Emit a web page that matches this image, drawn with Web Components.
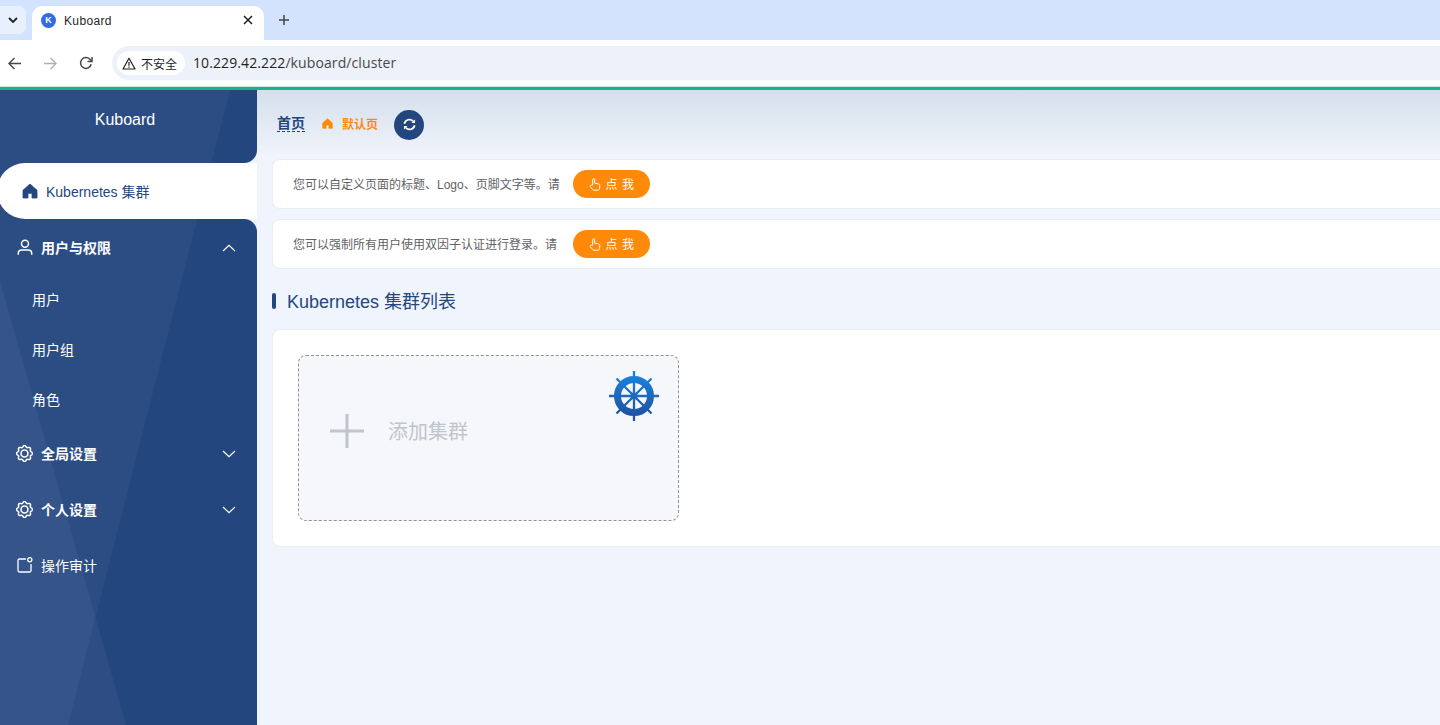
<!DOCTYPE html>
<html lang="zh"><head><meta charset="utf-8"><title>Kuboard</title>
<style>
html,body{margin:0;height:100%;overflow:hidden;background:#f0f4fc;font-family:"Liberation Sans","Noto Sans CJK SC",sans-serif}
body{display:flex;flex-direction:column;width:1440px;height:725px}
.app{display:flex;flex:1;min-height:0}
</style></head><body>
<browser-chrome></browser-chrome>
<div class="app">
<side-bar>
  <menu-item active icon="home">Kubernetes 集群</menu-item>
  <menu-item group icon="user" arrow="up">用户与权限</menu-item>
  <menu-item sub>用户</menu-item>
  <menu-item sub>用户组</menu-item>
  <menu-item sub>角色</menu-item>
  <menu-item group icon="gear" arrow="down">全局设置</menu-item>
  <menu-item group icon="gear" arrow="down">个人设置</menu-item>
  <menu-item plain icon="audit">操作审计</menu-item>
</side-bar>
<main-pane>
  <bread-crumbs></bread-crumbs>
  <tip-bar>您可以自定义页面的标题、Logo、页脚文字等。请</tip-bar>
  <tip-bar>您可以强制所有用户使用双因子认证进行登录。请</tip-bar>
  <section-title>Kubernetes 集群列表</section-title>
  <cluster-panel><add-cluster></add-cluster></cluster-panel>
</main-pane>
</div>
<script>
function def(name,html){customElements.define(name,class extends HTMLElement{connectedCallback(){if(this.shadowRoot)return;const r=this.attachShadow({mode:'open'});r.innerHTML=typeof html==='function'?html(this):html;}})}
function gearPath(){let d='';for(let i=0;i<=96;i++){const t=i/96*Math.PI*2,r=7.2+0.85*Math.cos(8*t);d+=(i?'L':'M')+(8.5+r*Math.sin(t)).toFixed(2)+' '+(8.5-r*Math.cos(t)).toFixed(2);}return d+'z';}
const HOME='M8 1 15 7.200V15H10V10.300H6V15H1V7.200z';
const ICONS={
home:'<svg width="16" height="16" viewBox="0 0 16 16"><path fill="currentColor" stroke="currentColor" stroke-width=".8" stroke-linejoin="round" d="'+HOME+'"/></svg>',
user:'<svg width="16" height="16" viewBox="0 0 16 16" fill="none" stroke="currentColor" stroke-width="1.500"><circle cx="8" cy="4.800" r="3.500"/><path d="M1.300 15.800v-1.600c0-2 1.600-3.300 3.400-3.300h6.600c1.800 0 3.400 1.300 3.400 3.300v1.600"/></svg>',
gear:'<svg width="17" height="17" viewBox="0 0 17 17" fill="none" stroke="currentColor" stroke-width="1.500"><path d="'+gearPath()+'" stroke-linejoin="round"/><circle cx="8.500" cy="8.500" r="3.500" stroke-width="1.600"/></svg>',
audit:'<svg width="16" height="16" viewBox="0 0 16 16" fill="none" stroke="currentColor" stroke-width="1.300"><path d="M9 2H2.500A1.500 1.500 0 0 0 1 3.500v10A1.500 1.500 0 0 0 2.500 15h10a1.500 1.500 0 0 0 1.500-1.500V7"/><circle cx="12.800" cy="2.800" r="2.100"/></svg>',
up:'<svg width="14" height="8" viewBox="0 0 14 8" fill="none" stroke="currentColor" stroke-width="1.200"><path d="M1 7 7 1.300 13 7"/></svg>',
down:'<svg width="14" height="8" viewBox="0 0 14 8" fill="none" stroke="currentColor" stroke-width="1.200"><path d="M1 1l6 5.700L13 1"/></svg>',
hand:'<svg width="12" height="13" viewBox="0 0 12 13" fill="none" stroke="currentColor" stroke-width="1"><path d="M3.700 7V1.700a1 1 0 0 1 2 0V5.200l3.300.6c1.200.2 1.900 1 1.800 2.200l-.2 2.300c-.1 1-.9 1.900-2 1.900H5.200c-.7 0-1.300-.3-1.700-.9L1.400 8.800c-.4-.6-.2-1.200.3-1.500.5-.3 1-.2 1.400.2z" stroke-linejoin="round"/></svg>'
};
def('browser-chrome',`<style>
:host{display:block;flex:none;height:90px;background:#fff;font-family:"Liberation Sans","Noto Sans CJK SC",sans-serif;color:#1f1f1f}
.strip{height:40px;background:#d3e3fd;display:flex;align-items:flex-end;box-sizing:border-box}
.list{width:26px;height:28px;margin:0 6px 6px 0;background:#e8f0fe;border-radius:0 8px 8px 0;display:flex;align-items:center;justify-content:center}
.tab{width:232px;height:34px;background:#fff;border-radius:10px 10px 0 0;display:flex;align-items:center;padding:0 0 6px 9px;box-sizing:border-box;font-size:12px}
.fav{width:15px;height:15px;border-radius:50%;background:#326ce5;color:#fff;font-size:9px;font-weight:700;display:flex;align-items:center;justify-content:center;margin-right:8px;flex:none}
.tt{flex:1;letter-spacing:.35px;padding-top:1px}
.x{margin-right:11px;display:flex}
.plus{margin:0 0 14px 14px;display:flex}
.bar{height:46px;display:flex;align-items:center;box-sizing:border-box}
.nav{width:36px;display:flex;justify-content:center;flex:none}
.omni{flex:1;height:34px;margin-left:8px;margin-right:-30px;background:#edf2fa;border-radius:17px;display:flex;align-items:center;padding-left:5px}
.chip{height:24px;width:68px;box-sizing:border-box;background:#fff;border-radius:12px;display:flex;align-items:center;padding-left:5px;font-size:12px;gap:5px;margin-right:8px}
.url{font-family:"Open Sans","Liberation Sans",sans-serif;font-size:14px;letter-spacing:.1px;color:#1f1f1f;padding-bottom:2px}
.url span{color:#474747}
.line{height:4px;box-sizing:border-box;background:#14b48e;border-top:1.500px solid #cfe9e0}
</style>
<div class="strip">
 <div class="list"><svg width="10" height="7" viewBox="0 0 10 7" fill="none" stroke="#1f1f1f" stroke-width="1.800"><path d="M1 1l4 4 4-4"/></svg></div>
 <div class="tab"><span class="fav">K</span><span class="tt">Kuboard</span>
 <span class="x"><svg width="10" height="10" viewBox="0 0 10 10" stroke="#1f1f1f" stroke-width="1.500"><path d="M1 1l8 8M9 1l-8 8"/></svg></span></div>
 <span class="plus"><svg width="12" height="12" viewBox="0 0 12 12" stroke="#444" stroke-width="1.500"><path d="M6 1v10M1 6h10"/></svg></span>
</div>
<div class="bar">
 <span class="nav" style="margin-left:-4px"><svg width="13" height="13" viewBox="0 0 14 14" fill="none" stroke="#474747" stroke-width="1.500"><path d="M14 7H1.500M7 1 1 7l6 6"/></svg></span>
 <span class="nav"><svg width="13" height="13" viewBox="0 0 14 14" fill="none" stroke="#b0b0b0" stroke-width="1.500"><path d="M0 7h12.500M7 1l6 6-6 6"/></svg></span>
 <span class="nav"><svg width="14" height="14" viewBox="0 0 14 14" fill="none" stroke="#474747" stroke-width="1.500"><path d="M12.200 8.300A5.400 5.400 0 1 1 10.800 3.200L12.500 5"/><path d="M13 1v4.500H8.500" /></svg></span>
 <div class="omni"><div class="chip"><svg width="14" height="13" viewBox="0 0 14 13" fill="none" stroke="#1f1f1f" stroke-width="1.200"><path d="M7 1.200 1 12h12z" stroke-linejoin="round"/><path d="M7 5v3.800M7 9.600v1.200"/></svg><span>不安全</span></div>
 <span class="url">10.229.42.222<span>/kuboard/cluster</span></span></div>
</div>
<div class="line"></div>`);
def('side-bar',`<style>
:host{display:block;position:relative;width:257px;flex:none;background:#24467f;color:#fff;overflow:hidden}
svg.bg{position:absolute;left:0;top:0}
.logo{position:relative;height:73px;box-sizing:border-box;padding-top:20px;text-align:center;font-size:16px;line-height:19px;padding-right:7px}
.menu{position:relative;display:flex;flex-direction:column}
</style>
<svg class="bg" width="257" height="635" viewBox="0 90 257 635"><path fill="#fff" fill-opacity=".04" d="M0 90H230L68 725H0z"/><path fill="#fff" fill-opacity=".045" d="M0 281 126 725H0z"/></svg>
<div class="logo">Kuboard</div>
<div class="menu"><slot></slot></div>`);
def('menu-item',h=>{
const ic=h.getAttribute('icon'),ar=h.getAttribute('arrow');
return `<style>
:host{display:flex;align-items:center;height:56px;box-sizing:border-box;padding-left:16px;font-size:14px;color:#fff;position:relative;font-weight:${h.hasAttribute('group')?'700':'400'}}
:host([sub]){height:50px;padding:0 0 2px 32px}
:host([active]){background:#fff;color:#24467f;border-radius:28px 0 0 28px;margin-left:-3px;padding-left:24px}
:host([active])::before,:host([active])::after{content:"";position:absolute;right:0;width:13px;height:13px}
:host([active])::before{top:-13px;background:radial-gradient(circle at 0 0,transparent 12.500px,#eef2fa 13.500px)}
:host([active])::after{bottom:-13px;background:radial-gradient(circle at 0 100%,transparent 12.500px,#f0f4fc 13.500px)}
.i{display:flex;width:17px;margin-right:8px;justify-content:center;flex:none}
.t{flex:1}
.a{display:flex;margin:1px 21px 0 0}
</style>${ic?`<span class="i">${ICONS[ic]}</span>`:''}<span class="t"><slot></slot></span>${ar?`<span class="a">${ICONS[ar]}</span>`:''}`});
def('main-pane',`<style>
:host{display:flex;flex-direction:column;flex:1;min-width:0;overflow:hidden;padding-left:15px;box-sizing:border-box;
background:linear-gradient(#d4dfeb,#f0f4fc 66px)}
</style><slot></slot>`);
def('bread-crumbs',`<style>
:host{display:flex;align-items:center;height:69px;flex:none;padding:0 0 2px 5px;box-sizing:border-box;color:#24467f}
.h{font-size:14px;font-weight:700;border-bottom:1px dashed #24467f;line-height:16px;margin-right:17px}
.p{display:flex;align-items:center;color:#ff8a0a;font-size:12px;font-weight:700;gap:9px;margin-right:16px}
.r{width:30px;height:30px;margin-top:2px;border-radius:50%;background:#24467f;display:flex;align-items:center;justify-content:center}
</style><span class="h">首页</span><span class="p"><svg width="11" height="11" viewBox="0 0 16 16"><path fill="currentColor" stroke="currentColor" stroke-width="1" stroke-linejoin="round" d="${HOME}"/></svg>默认页</span>
<span class="r"><svg width="13" height="13" viewBox="0 0 14 14" fill="none" stroke="#fff" stroke-width="1.900"><path d="M1.500 6.200A5.500 5.500 0 0 1 11 3.500"/><path d="M12.500 7.800A5.500 5.500 0 0 1 3 10.500"/><path fill="#fff" stroke="none" d="M13 1.500v4H9zM1 12.500v-4h4z"/></svg></span>`);
def('tip-bar',`<style>
:host{display:flex;align-items:center;height:50px;flex:none;margin:0 -30px 10px 0;padding:0 0 0 20px;box-sizing:border-box;background:#fff;border:1px solid #e9eef6;border-radius:8px;font-size:12px;color:#606266}
.t{width:280px;padding-bottom:2px;white-space:nowrap}
button{all:unset;display:inline-flex;align-items:center;justify-content:center;box-sizing:border-box;height:28px;width:77px;border-radius:14px;background:#ff8a0a;color:#fff;font:12px "Liberation Sans","Noto Sans CJK SC",sans-serif;letter-spacing:.5px;gap:5px;white-space:nowrap}
button span{padding-bottom:2px}
</style><span class="t"><slot></slot></span><button>${ICONS.hand}<span>点 我</span></button>`);
def('section-title',`<style>
:host{display:flex;align-items:center;height:40px;flex:none;margin:1px 0 9px;font-size:18px;color:#24467f}
i{width:4px;height:16px;border-radius:2px;background:#24467f;margin:1px 11px 0 0}
</style><i></i><slot></slot>`);
def('cluster-panel',`<style>
:host{display:block;flex:none;height:218px;margin-right:-30px;padding:25px;box-sizing:border-box;background:#fff;border:1px solid #e9eef6;border-radius:8px}
</style><slot></slot>`);
def('add-cluster',`<style>
:host{display:block;position:relative;width:381px;height:166px;box-sizing:border-box;background:#f5f7fa;border:1px dashed #909399;border-radius:8px;color:#c0c4cc}
.row{display:flex;align-items:center;padding:0 0 0 30px;box-sizing:border-box;font-size:20px;gap:23px;height:150px}
.row span{padding-bottom:2px}
svg.w{position:absolute;right:19px;top:15px}
</style>
<div class="row"><svg width="36" height="36" viewBox="0 0 36 36" stroke="#c0c4cc" stroke-width="3"><path d="M18 1v34M1 18h34"/></svg><span>添加集群</span></div>
<svg class="w" width="50" height="50" viewBox="0 0 50 50" fill="none"><defs><linearGradient id="g" gradientUnits="userSpaceOnUse" x1="0" y1="5" x2="0" y2="45"><stop offset="0" stop-color="#1a80dc"/><stop offset="1" stop-color="#1f52a0"/></linearGradient></defs>
<g stroke="url(#g)"><circle cx="25" cy="25" r="16.500" stroke-width="7"/><path stroke-width="2.300" d="M25 0v50M0 25h50M7.500 7.500l35 35M42.500 7.500l-35 35"/></g>
<circle cx="25" cy="25" r="3.500" fill="url(#g)"/></svg>`);
</script>
</body></html>
